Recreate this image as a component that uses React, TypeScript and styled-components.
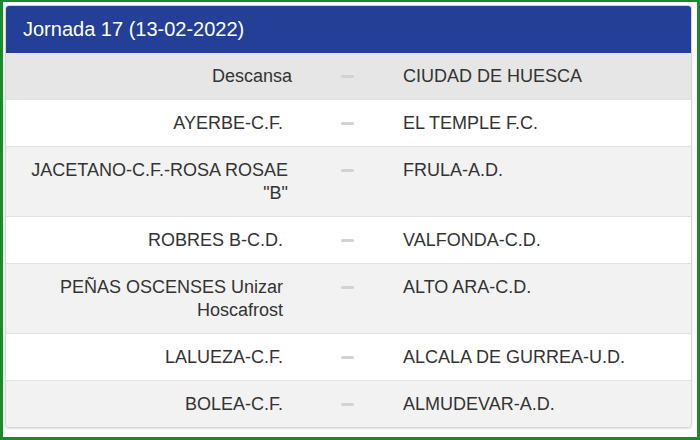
import styled, { createGlobalStyle } from "styled-components";

const GlobalStyle = createGlobalStyle`
  html, body {
    margin: 0;
    padding: 0;
    background: #ffffff;
  }
  body {
    font-family: "Liberation Sans", Arial, Helvetica, sans-serif;
    color: #333333;
  }
`;

const Frame = styled.div`
  box-sizing: border-box;
  width: 700px;
  height: 440px;
  border: 3px solid #1b8a2c;
  border-top-width: 2px;
  padding: 3px 5px 7px 2px;
  background: #ffffff;
`;

const Panel = styled.div`
  border: 1px solid #d6d6d6;
  border-radius: 4px;
  overflow: hidden;
  box-shadow: 0 1px 2px rgba(0, 0, 0, 0.12);
  background: #ffffff;
`;

const Header = styled.div`
  background: #233f98;
  color: #ffffff;
  font-size: 20px;
  height: 47px;
  display: flex;
  align-items: center;
  padding: 0 17px;
`;

const Row = styled.div<{ $tone: "hover" | "stripe" | "plain" }>`
  display: grid;
  grid-template-columns: 286px 111px 1fr;
  font-size: 18px;
  line-height: 23px;
  border-top: 1px solid #e2e2e2;
  background: ${(p) =>
    p.$tone === "hover" ? "#e6e6e6" : p.$tone === "stripe" ? "#f2f2f2" : "#ffffff"};
  &:first-of-type {
    border-top: none;
  }
`;

const Home = styled.div<{ $pr: number }>`
  text-align: right;
  padding: 12px ${(p) => p.$pr}px 11px 10px;
`;

const Sep = styled.div`
  display: flex;
  justify-content: center;
  padding-top: 22px;
`;

const Dash = styled.span`
  width: 13px;
  height: 3px;
  border-radius: 2px;
  background: #d2d2d2;
`;

const Away = styled.div`
  padding: 12px 8px 11px 0;
`;

const matches: [string, string, number][] = [
  ["Descansa", "CIUDAD DE HUESCA", 0],
  ["AYERBE-C.F.", "EL TEMPLE F.C.", 9],
  ['JACETANO-C.F.-ROSA ROSAE "B"', "FRULA-A.D.", 4],
  ["ROBRES B-C.D.", "VALFONDA-C.D.", 9],
  ["PEÑAS OSCENSES Unizar Hoscafrost", "ALTO ARA-C.D.", 9],
  ["LALUEZA-C.F.", "ALCALA DE GURREA-U.D.", 9],
  ["BOLEA-C.F.", "ALMUDEVAR-A.D.", 9],
];

export default function App() {
  return (
    <>
      <GlobalStyle />
      <Frame>
        <Panel>
          <Header>Jornada 17 (13-02-2022)</Header>
          <div>
            {matches.map(([home, away, pr], i) => (
              <Row key={i} $tone={i === 0 ? "hover" : i % 2 === 0 ? "stripe" : "plain"}>
                <Home $pr={pr}>{home}</Home>
                <Sep>
                  <Dash />
                </Sep>
                <Away>{away}</Away>
              </Row>
            ))}
          </div>
        </Panel>
      </Frame>
    </>
  );
}
